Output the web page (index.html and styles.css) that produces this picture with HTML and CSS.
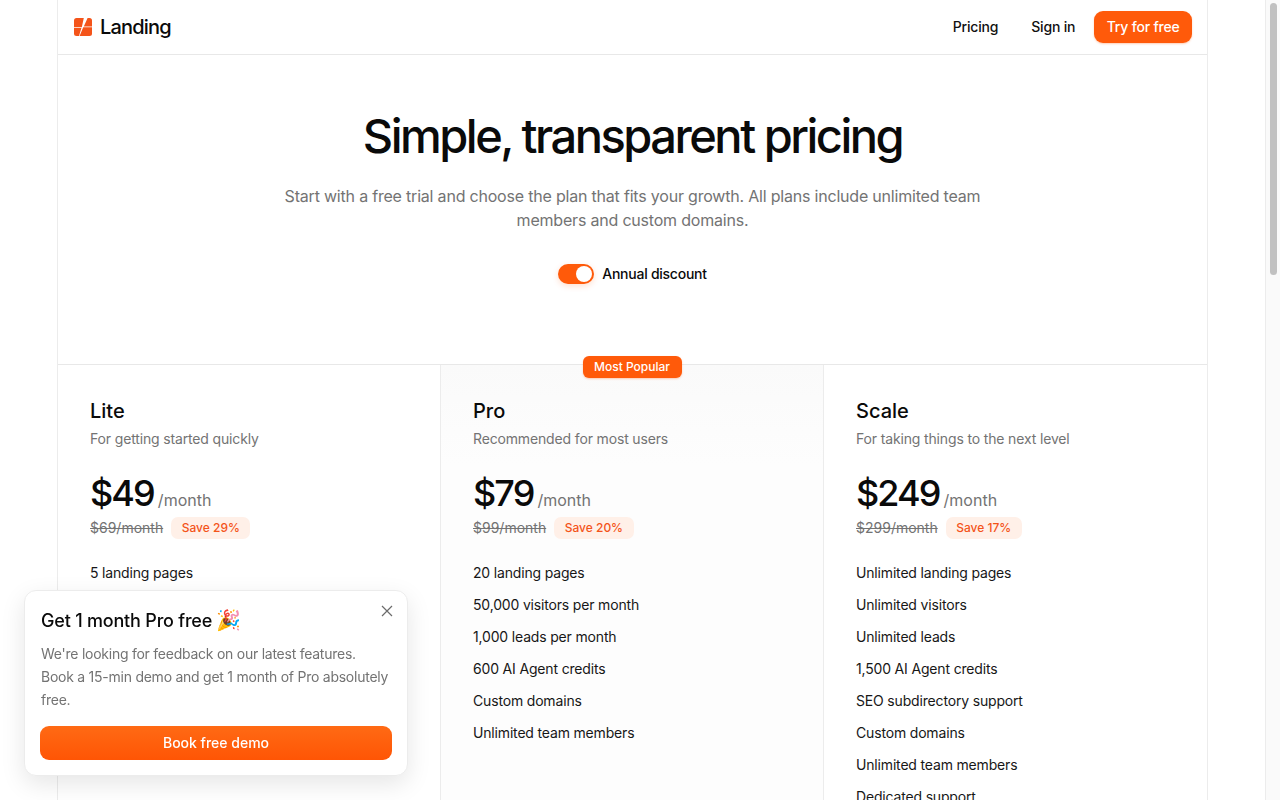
FILE: index.html
```html
<!DOCTYPE html>
<html lang="en">
<head>
<meta charset="utf-8">
<title>Landing - Pricing</title>
<link rel="stylesheet" href="styles.css">
</head>
<body>
<div class="page">
  <header class="nav">
    <a class="brand">
      <svg class="logo" viewBox="0 0 18 18" width="18" height="18"><rect width="18" height="18" rx="2.5" fill="#f4541a"/><path d="M9.8 0 L13.6 0 L9.8 8.4 L18 8.4 L18 9.2 L9.2 9.2 L5.6 18 L5 18 L7.4 9.9 L0 9.9 L0 9.2 L7.8 9.2 Z" fill="#fff"/></svg>
      <span class="brand-name">Landing</span>
    </a>
    <nav class="nav-links">
      <a class="nav-link">Pricing</a>
      <a class="nav-link">Sign in</a>
      <a class="btn-try">Try for free</a>
    </nav>
  </header>

  <section class="hero">
    <h1 class="hero-title">Simple, transparent pricing</h1>
    <p class="hero-sub">Start with a free trial and choose the plan that fits your growth. All plans include unlimited team members and custom domains.</p>
    <div class="toggle-row">
      <span class="toggle"><span class="knob"></span></span>
      <span class="toggle-label">Annual discount</span>
    </div>
  </section>

  <section class="plans">
    <article class="plan">
      <h2 class="plan-name">Lite</h2>
      <p class="plan-desc">For getting started quickly</p>
      <div class="price-row"><span class="price">$49</span><span class="per">/month</span></div>
      <div class="old-row"><s class="old">$69/month</s><span class="save">Save 29%</span></div>
      <ul class="features">
        <li>5 landing pages</li>
      </ul>
    </article>
    <article class="plan plan-pro">
      <span class="popular">Most Popular</span>
      <h2 class="plan-name">Pro</h2>
      <p class="plan-desc">Recommended for most users</p>
      <div class="price-row"><span class="price">$79</span><span class="per">/month</span></div>
      <div class="old-row"><s class="old">$99/month</s><span class="save">Save 20%</span></div>
      <ul class="features">
        <li>20 landing pages</li>
        <li>50,000 visitors per month</li>
        <li>1,000 leads per month</li>
        <li>600 AI Agent credits</li>
        <li>Custom domains</li>
        <li>Unlimited team members</li>
      </ul>
    </article>
    <article class="plan">
      <h2 class="plan-name">Scale</h2>
      <p class="plan-desc">For taking things to the next level</p>
      <div class="price-row"><span class="price">$249</span><span class="per">/month</span></div>
      <div class="old-row"><s class="old">$299/month</s><span class="save">Save 17%</span></div>
      <ul class="features">
        <li>Unlimited landing pages</li>
        <li>Unlimited visitors</li>
        <li>Unlimited leads</li>
        <li>1,500 AI Agent credits</li>
        <li>SEO subdirectory support</li>
        <li>Custom domains</li>
        <li>Unlimited team members</li>
        <li>Dedicated support</li>
      </ul>
    </article>
  </section>
</div>

<aside class="promo">
  <svg class="promo-close" viewBox="0 0 12 12" width="12" height="12"><path d="M1 1 L11 11 M11 1 L1 11" stroke="#6b6b6b" stroke-width="1.2" fill="none"/></svg>
  <h3 class="promo-title">Get 1 month Pro free <span class="emoji">🎉</span></h3>
  <p class="promo-text">We're looking for feedback on our latest features. Book a 15-min demo and get 1 month of Pro absolutely free.</p>
  <a class="promo-btn">Book free demo</a>
</aside>
<div class="scrollbar"><div class="scrollbar-thumb"></div></div>
</body>
</html>
```
FILE: styles.css
```css
* { box-sizing: border-box; }
html { background: #fff; }
body { margin: 0; padding-right: 15px; font-family: Inter, "Liberation Sans", sans-serif; color: #0a0a0a; background: #fff; }
.scrollbar { position: fixed; top: 0; right: 0; bottom: 0; width: 15px; padding: 3px 3px 0 4px; background: #fafafa; border-left: 1px solid #ececec; }
.scrollbar-thumb { height: 272px; background: #c1c1c1; border-radius: 4px; }
.page { width: 1151px; margin: 0 auto; border-left: 1px solid #ececec; border-right: 1px solid #ececec; }
.nav { height: 55px; display: flex; align-items: center; justify-content: space-between; padding: 0 15px 0 16px; border-bottom: 1px solid #e8e8e8; }
.brand { display: flex; align-items: center; gap: 8px; }
.logo { display: block; }
.brand-name { font-size: 20px; font-weight: 500; letter-spacing: -0.8px; }
.nav-links { display: flex; align-items: center; }
.nav-link { font-size: 14px; font-weight: 500; margin-right: 33px; padding-bottom: 2px; color: #111; letter-spacing: -0.2px; }
.nav-link + .nav-link { margin-right: 19px; }
.btn-try { height: 32px; padding: 0 12.5px 2px; display: flex; align-items: center; font-size: 14px; font-weight: 500; color: #fff; background: #ff5a0a; border-radius: 9px; box-shadow: 0 1px 2px rgba(255,90,10,.3); letter-spacing: -0.2px; }
.hero { height: 309px; padding-top: 53px; display: flex; flex-direction: column; align-items: center; text-align: center; }
.hero-title { margin: 0; font-size: 47px; line-height: 56px; font-weight: 500; letter-spacing: -2.5px; }
.hero-sub { width: 720px; margin: 20px 0 0; font-size: 16px; line-height: 24px; color: #737373; letter-spacing: -0.2px; }
.toggle-row { display: flex; align-items: center; gap: 8px; margin-top: 32px; }
.toggle { width: 36px; height: 20px; padding: 2px; border-radius: 10px; background: #ff5a0a; display: flex; justify-content: flex-end; box-shadow: 0 2px 6px rgba(255,90,10,.2); }
.knob { width: 16px; height: 16px; border-radius: 50%; background: #fff; }
.toggle-label { font-size: 14px; font-weight: 500; letter-spacing: -0.25px; padding-bottom: 2px; }
.plans { display: grid; grid-template-columns: 383px 383px 383px; border-top: 1px solid #e8e8e8; }
.plan { position: relative; padding: 32px 32px 0; height: 600px; border-right: 1px solid #ececec; }
.plan:last-child { border-right: 0; }
.plan-pro { background: linear-gradient(180deg, #fafafa 0, #fdfdfd 100px, #fdfdfd 100%); }
.popular { position: absolute; top: -9px; left: 142px; height: 22px; padding: 0 12px 2px 11px; display: flex; align-items: center; font-size: 12px; font-weight: 500; color: #fff; background: #ff5a0a; border-radius: 6px; box-shadow: 0 1px 2px rgba(255,90,10,.3); }
.plan-name { margin: 0; font-size: 20px; line-height: 28px; font-weight: 500; }
.plan-desc { margin: 4px 0 0; font-size: 14px; line-height: 20px; color: #737373; letter-spacing: -0.15px; }
.price-row { margin-top: 20px; display: flex; align-items: baseline; gap: 4px; height: 48px; }
.price { font-size: 36px; line-height: 48px; font-weight: 500; letter-spacing: -1.9px; }
.per { font-size: 16px; color: #737373; }
.old-row { display: flex; align-items: center; gap: 8px; height: 22px; }
.old { font-size: 14px; color: #737373; padding-bottom: 1px; }
.save { height: 22px; padding: 0 10.5px 2px; display: flex; align-items: center; font-size: 12px; font-weight: 500; color: #f4541a; background: #fff0e8; border-radius: 7px; }
.features { list-style: none; margin: 24px 0 0; padding: 0; display: flex; flex-direction: column; gap: 12px; }
.features li { font-size: 14px; line-height: 20px; color: #171717; letter-spacing: -0.17px; }
.promo { position: fixed; left: 24px; bottom: 24px; width: 384px; height: 186px; padding: 16px; background: #fff; border: 1px solid #ececec; border-radius: 12px; box-shadow: 0 8px 24px rgba(0,0,0,.1); }
.promo-close { position: absolute; top: 14px; right: 14px; }
.promo-title { margin: 0; font-size: 18px; line-height: 28px; font-weight: 500; letter-spacing: -0.2px; }
.emoji { font-family: "Noto Color Emoji", sans-serif; font-size: 20px; line-height: 20px; }
.promo-text { margin: 7px 0 0; font-size: 14px; line-height: 23px; color: #737373; letter-spacing: -0.25px; }
.promo-btn { display: flex; align-items: center; justify-content: center; height: 34px; margin: 15px -1px 0; padding-bottom: 2px; font-size: 14px; font-weight: 500; color: #fff; background: linear-gradient(180deg, #ff6a14, #ff5505); border-radius: 9px; }
```
